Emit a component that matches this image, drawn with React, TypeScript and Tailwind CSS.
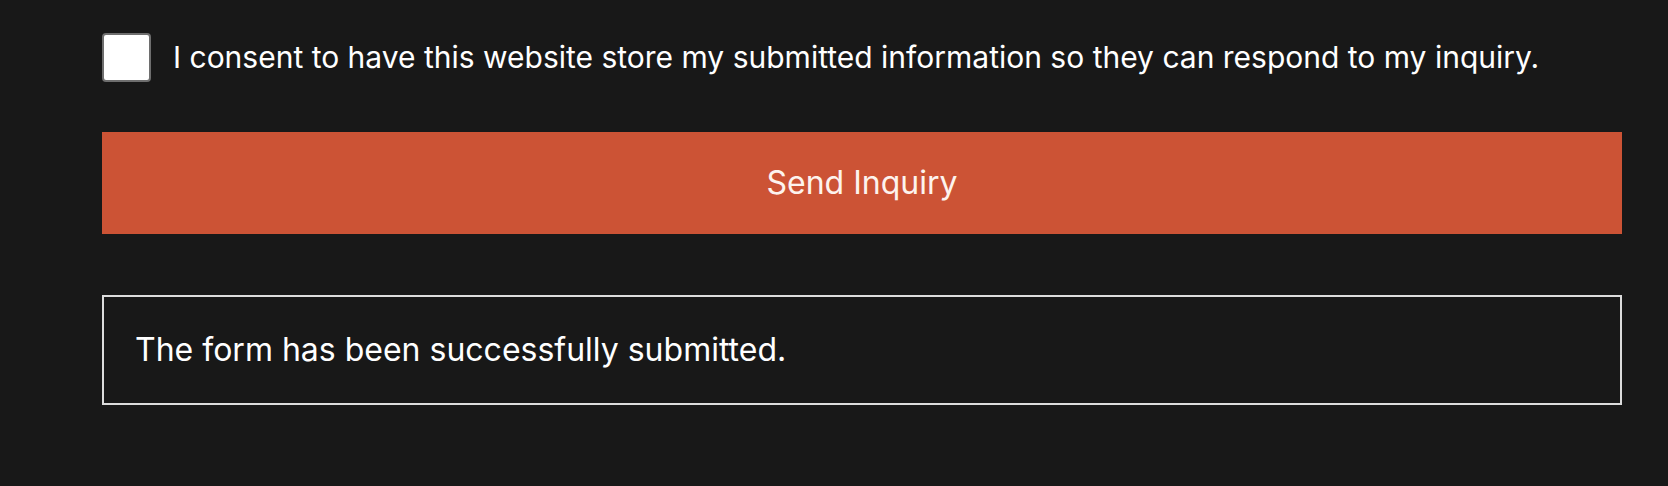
import React from 'react';

const App: React.FC = () => {
  return (
    <div className="min-h-[486px] w-full bg-[#181818] pt-[32px] font-['Inter',sans-serif] text-white">
      <div className="ml-[102px] w-[1520px]">
        {/* Consent */}
        <label className="flex items-center gap-[22px]">
          <span className="h-[49px] w-[49px] shrink-0 rounded-[4px] border-2 border-[#6e6e6e] bg-white" />
          <span className="text-[30px] leading-[50px]">
            I consent to have this website store my submitted information so they can respond to my inquiry.
          </span>
        </label>

        {/* Submit */}
        <button className="mt-[50px] flex h-[102px] w-full items-center justify-center bg-[#cc5335] text-[32px] text-[#fdf3ee]">
          Send Inquiry
        </button>

        {/* Result */}
        <div className="mt-[61px] flex h-[110px] items-center border-2 border-[#dcdcdc] px-[31px] text-[32px]">
          The form has been successfully submitted.
        </div>
      </div>
    </div>
  );
};

export default App;
